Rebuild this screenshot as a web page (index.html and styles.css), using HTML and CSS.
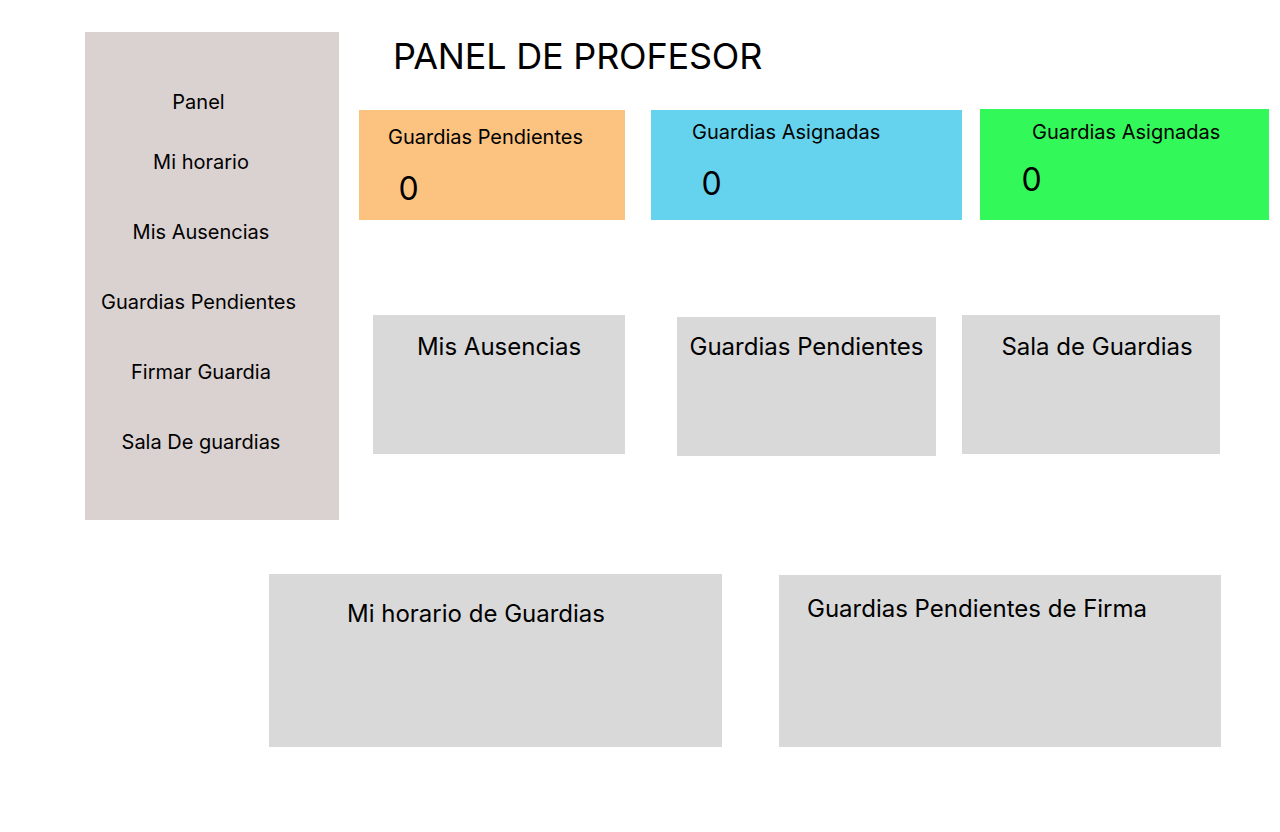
FILE: index.html
```html
<!DOCTYPE html>
<html lang="es">
<head>
    <meta charset="UTF-8">
    <meta name="viewport" content="width=device-width, initial-scale=1.0">
    <title>Panel de Profesor</title>
    <link rel="stylesheet" href="styles.css">
</head>
<body>
    <div class="page">
        <div class="top">
            <!-- Menu lateral -->
            <nav class="sidebar">
                <a class="nav-item nav-item-first shift" href="#">Panel</a>
                <a class="nav-item" href="#">Mi horario</a>
                <a class="nav-item" href="#">Mis Ausencias</a>
                <a class="nav-item shift" href="#">Guardias Pendientes</a>
                <a class="nav-item" href="#">Firmar Guardia</a>
                <a class="nav-item" href="#">Sala De guardias</a>
            </nav>

            <main class="main">
                <h1 class="title">PANEL DE PROFESOR</h1>

                <!-- Contadores -->
                <div class="stats">
                    <div class="stat stat-pending">
                        <div class="stat-label">Guardias Pendientes</div>
                        <div class="stat-value">0</div>
                    </div>
                    <div class="stat stat-assigned">
                        <div class="stat-label">Guardias Asignadas</div>
                        <div class="stat-value">0</div>
                    </div>
                    <div class="stat stat-done">
                        <div class="stat-label">Guardias Asignadas</div>
                        <div class="stat-value">0</div>
                    </div>
                </div>

                <!-- Accesos -->
                <div class="shortcuts">
                    <div class="box box-absences">Mis Ausencias</div>
                    <div class="box box-pending">Guardias Pendientes</div>
                    <div class="box box-room">Sala de Guardias</div>
                </div>
            </main>
        </div>

        <div class="bottom">
            <div class="panel panel-schedule">Mi horario de Guardias</div>
            <div class="panel panel-sign">Guardias Pendientes de Firma</div>
        </div>
    </div>
</body>
</html>
```

FILE: styles.css
```css
html, body {
    margin: 0;
    padding: 0;
    background-color: #ffffff;
    font-family: 'Inter', 'Roboto', sans-serif;
    color: #000000;
}
.page {
    padding: 32px 0 0 85px;
}
.top {
    display: flex;
    align-items: flex-start;
}

/* Sidebar */
.sidebar {
    width: 254px;
    height: 488px;
    box-sizing: border-box;
    padding: 57.8px 22px 0 0;
    background-color: #dad1d1;
    display: flex;
    flex-direction: column;
    flex-shrink: 0;
}
.nav-item {
    display: block;
    font-size: 20px;
    line-height: 24px;
    text-align: center;
    color: #000000;
    text-decoration: none;
    margin-bottom: 46px;
}
.nav-item-first {
    margin-bottom: 36px;
}
.nav-item.shift {
    padding-right: 5px;
}

/* Main */
.main {
    flex: 1;
}
.title {
    margin: 2px 0 0 54px;
    font-size: 36px;
    line-height: 44px;
    font-weight: 400;
    letter-spacing: -0.2px;
}
.stats {
    display: flex;
    align-items: flex-start;
    margin-top: 31px;
}
.stat {
    box-sizing: border-box;
    height: 110px;
}
.stat-label {
    font-size: 20px;
    line-height: 24px;
}
.stat-value {
    font-size: 32px;
    line-height: 40px;
}
.stat-pending {
    width: 266px;
    margin: 1px 0 0 20px;
    padding: 15.3px 0 0 29px;
    background-color: #fcc280;
}
.stat-pending .stat-value {
    margin: 19.3px 0 0 10.5px;
}
.stat-assigned {
    width: 311px;
    margin: 1px 0 0 26px;
    padding: 10.3px 0 0 41px;
    background-color: #66d3ee;
}
.stat-assigned .stat-value {
    margin: 19.7px 0 0 9.5px;
}
.stat-done {
    width: 289px;
    height: 111px;
    margin-left: 18px;
    padding: 11.3px 0 0 52px;
    background-color: #33f85a;
}
.stat-done .stat-value {
    margin: 15.7px 0 0 -10.5px;
}

.shortcuts {
    display: flex;
    align-items: flex-start;
    margin-top: 95px;
}
.box {
    box-sizing: border-box;
    height: 139px;
    background-color: #d9d9d9;
    font-size: 24px;
    line-height: 29px;
    text-align: center;
}
.box-absences {
    width: 252px;
    margin-left: 34px;
    padding-top: 16.7px;
}
.box-pending {
    width: 259px;
    margin: 2px 0 0 52px;
    padding-top: 14.9px;
}
.box-room {
    width: 258px;
    margin-left: 26px;
    padding: 16.9px 0 0 12px;
}

/* Fila inferior */
.bottom {
    display: flex;
    align-items: flex-start;
    margin-top: 54px;
    padding-left: 184px;
}
.panel {
    box-sizing: border-box;
    background-color: #d9d9d9;
    font-size: 24px;
    line-height: 29px;
}
.panel-schedule {
    width: 453px;
    height: 173px;
    padding: 25.2px 0 0 78px;
}
.panel-sign {
    width: 442px;
    height: 172px;
    margin: 1px 0 0 57px;
    padding: 19.2px 0 0 28px;
}
```
